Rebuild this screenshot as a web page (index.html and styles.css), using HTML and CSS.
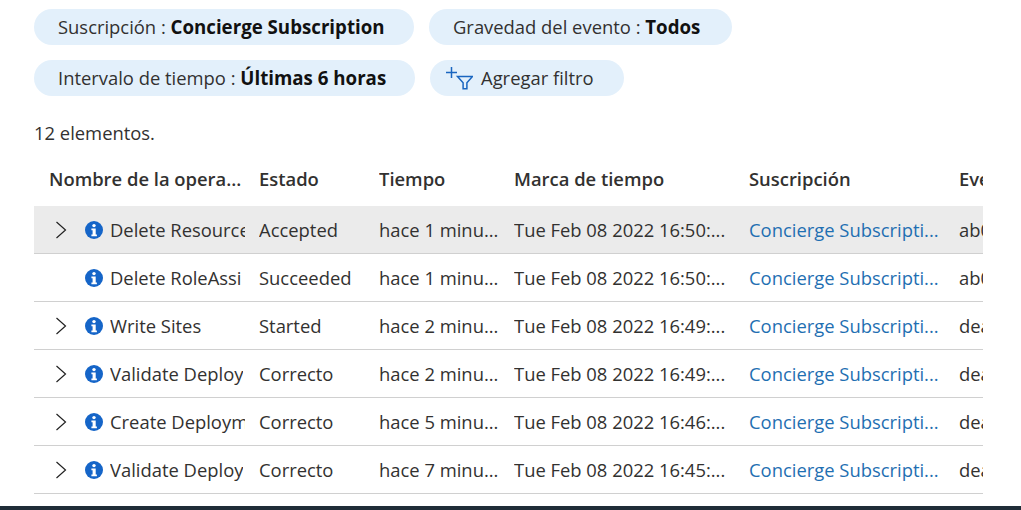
FILE: index.html
```html
<!DOCTYPE html>
<html lang="en">
<head>
  <meta charset="UTF-8">
  <title>Registro de actividad</title>
  <link rel="stylesheet" href="styles.css">
</head>
<body>
  <div class="content">
    <div class="filters">
      <div class="pill pill-sub">Suscripción : <b>Concierge Subscription</b></div>
      <div class="pill pill-sev">Gravedad del evento : <b>Todos</b></div>
    </div>
    <div class="filters">
      <div class="pill pill-time">Intervalo de tiempo : <b>Últimas 6 horas</b></div>
      <div class="pill pill-add">
        <svg class="add-icon" width="28" height="26" viewBox="0 0 28 26" fill="none" stroke="#1a66c0" stroke-width="1.5">
          <path d="M1 6.5h11M6.5 1v11"/>
          <path d="M12.5 10.5h15l-5.6 6.2v6h-3.8v-6z"/>
        </svg>
        <span>Agregar filtro</span>
      </div>
    </div>

    <p class="count">12 elementos.</p>

    <div class="table">
      <div class="row head">
        <div class="cell name-head">Nombre de la opera...</div>
        <div class="cell">Estado</div>
        <div class="cell">Tiempo</div>
        <div class="cell">Marca de tiempo</div>
        <div class="cell">Suscripción</div>
        <div class="cell">Eve</div>
      </div>

      <div class="row selected">
        <div class="cell name">
          <svg class="chevron" width="12" height="18" viewBox="0 0 12 18" fill="none" stroke="#222" stroke-width="1.2"><path d="M1.5 1l9 8-9 8"/></svg>
          <svg class="info" width="18" height="18" viewBox="0 0 18 18"><circle cx="9" cy="9" r="9" fill="#1565c8"/><circle cx="9" cy="4.6" r="1.7" fill="#fff"/><path d="M6.4 7.4h4.3v6h1.2v1.8H6.4v-1.8h1.2V9.2H6.4z" fill="#fff"/></svg>
          <span class="op">Delete Resource</span>
        </div>
        <div class="cell">Accepted</div>
        <div class="cell">hace 1 minu...</div>
        <div class="cell">Tue Feb 08 2022 16:50:...</div>
        <div class="cell link">Concierge Subscripti...</div>
        <div class="cell">ab0</div>
      </div>

      <div class="row">
        <div class="cell name">
          <span class="no-chevron"></span>
          <svg class="info" width="18" height="18" viewBox="0 0 18 18"><circle cx="9" cy="9" r="9" fill="#1565c8"/><circle cx="9" cy="4.6" r="1.7" fill="#fff"/><path d="M6.4 7.4h4.3v6h1.2v1.8H6.4v-1.8h1.2V9.2H6.4z" fill="#fff"/></svg>
          <span class="op">Delete RoleAssi</span>
        </div>
        <div class="cell">Succeeded</div>
        <div class="cell">hace 1 minu...</div>
        <div class="cell">Tue Feb 08 2022 16:50:...</div>
        <div class="cell link">Concierge Subscripti...</div>
        <div class="cell">ab0</div>
      </div>

      <div class="row">
        <div class="cell name">
          <svg class="chevron" width="12" height="18" viewBox="0 0 12 18" fill="none" stroke="#222" stroke-width="1.2"><path d="M1.5 1l9 8-9 8"/></svg>
          <svg class="info" width="18" height="18" viewBox="0 0 18 18"><circle cx="9" cy="9" r="9" fill="#1565c8"/><circle cx="9" cy="4.6" r="1.7" fill="#fff"/><path d="M6.4 7.4h4.3v6h1.2v1.8H6.4v-1.8h1.2V9.2H6.4z" fill="#fff"/></svg>
          <span class="op">Write Sites</span>
        </div>
        <div class="cell">Started</div>
        <div class="cell">hace 2 minu...</div>
        <div class="cell">Tue Feb 08 2022 16:49:...</div>
        <div class="cell link">Concierge Subscripti...</div>
        <div class="cell">dea</div>
      </div>

      <div class="row">
        <div class="cell name">
          <svg class="chevron" width="12" height="18" viewBox="0 0 12 18" fill="none" stroke="#222" stroke-width="1.2"><path d="M1.5 1l9 8-9 8"/></svg>
          <svg class="info" width="18" height="18" viewBox="0 0 18 18"><circle cx="9" cy="9" r="9" fill="#1565c8"/><circle cx="9" cy="4.6" r="1.7" fill="#fff"/><path d="M6.4 7.4h4.3v6h1.2v1.8H6.4v-1.8h1.2V9.2H6.4z" fill="#fff"/></svg>
          <span class="op">Validate Deploy</span>
        </div>
        <div class="cell">Correcto</div>
        <div class="cell">hace 2 minu...</div>
        <div class="cell">Tue Feb 08 2022 16:49:...</div>
        <div class="cell link">Concierge Subscripti...</div>
        <div class="cell">dea</div>
      </div>

      <div class="row">
        <div class="cell name">
          <svg class="chevron" width="12" height="18" viewBox="0 0 12 18" fill="none" stroke="#222" stroke-width="1.2"><path d="M1.5 1l9 8-9 8"/></svg>
          <svg class="info" width="18" height="18" viewBox="0 0 18 18"><circle cx="9" cy="9" r="9" fill="#1565c8"/><circle cx="9" cy="4.6" r="1.7" fill="#fff"/><path d="M6.4 7.4h4.3v6h1.2v1.8H6.4v-1.8h1.2V9.2H6.4z" fill="#fff"/></svg>
          <span class="op">Create Deploym</span>
        </div>
        <div class="cell">Correcto</div>
        <div class="cell">hace 5 minu...</div>
        <div class="cell">Tue Feb 08 2022 16:46:...</div>
        <div class="cell link">Concierge Subscripti...</div>
        <div class="cell">dea</div>
      </div>

      <div class="row">
        <div class="cell name">
          <svg class="chevron" width="12" height="18" viewBox="0 0 12 18" fill="none" stroke="#222" stroke-width="1.2"><path d="M1.5 1l9 8-9 8"/></svg>
          <svg class="info" width="18" height="18" viewBox="0 0 18 18"><circle cx="9" cy="9" r="9" fill="#1565c8"/><circle cx="9" cy="4.6" r="1.7" fill="#fff"/><path d="M6.4 7.4h4.3v6h1.2v1.8H6.4v-1.8h1.2V9.2H6.4z" fill="#fff"/></svg>
          <span class="op">Validate Deploy</span>
        </div>
        <div class="cell">Correcto</div>
        <div class="cell">hace 7 minu...</div>
        <div class="cell">Tue Feb 08 2022 16:45:...</div>
        <div class="cell link">Concierge Subscripti...</div>
        <div class="cell">dea</div>
      </div>
    </div>
  </div>
  <div class="taskbar"></div>
</body>
</html>
```

FILE: styles.css
```css
html, body {
  height: 100%;
}

body {
  margin: 0;
  display: flex;
  flex-direction: column;
  overflow: hidden;
  background-color: #fff;
  color: #323130;
  font-family: "Open Sans", "Noto Sans", sans-serif;
  font-size: 18.4px;
}

.content {
  flex: 1;
  min-height: 0;
  padding: 9px 38px 0 34px;
}

.filters {
  display: flex;
  gap: 15px;
  margin-bottom: 15px;
}

.pill {
  box-sizing: border-box;
  height: 36px;
  padding: 0 24px;
  border-radius: 18px;
  background-color: #e3f0fb;
  line-height: 36px;
  white-space: nowrap;
}

.pill b {
  color: #111;
  font-size: 18.7px;
}

.pill-sub { width: 380px; }
.pill-sev { width: 303px; }
.pill-time { width: 381px; }

.pill-add {
  display: flex;
  align-items: center;
  gap: 8px;
  width: 194px;
  padding-left: 15px;
}

.add-icon {
  flex: none;
  margin-top: 2px;
}

.count {
  margin: 0;
  padding-top: 9px;
  line-height: 25px;
}

.table {
  margin-top: 8px;
  overflow: hidden;
}

.row {
  display: grid;
  grid-template-columns: 225px 120px 135px 235px 210px 100px;
  height: 48px;
  align-items: center;
  box-sizing: border-box;
  border-bottom: 1px solid #d0d0d0;
}

.row.head {
  height: 53px;
  padding-bottom: 3px;
  border-bottom: none;
  font-weight: 600;
}

.row.selected {
  background-color: #ebebeb;
}

.cell {
  white-space: nowrap;
  overflow: hidden;
}

.head .name-head {
  padding-left: 15px;
}

.name {
  display: flex;
  align-items: center;
  padding-left: 21px;
  box-sizing: border-box;
  width: 211px;
}

.chevron, .no-chevron {
  flex: none;
  width: 12px;
  margin-right: 18px;
}

.info {
  flex: none;
  margin-right: 7px;
}

.op {
  overflow: hidden;
}

.link {
  color: #1f6fb2;
}

.taskbar {
  flex: none;
  height: 4px;
  background-color: #1f2d38;
}
```
